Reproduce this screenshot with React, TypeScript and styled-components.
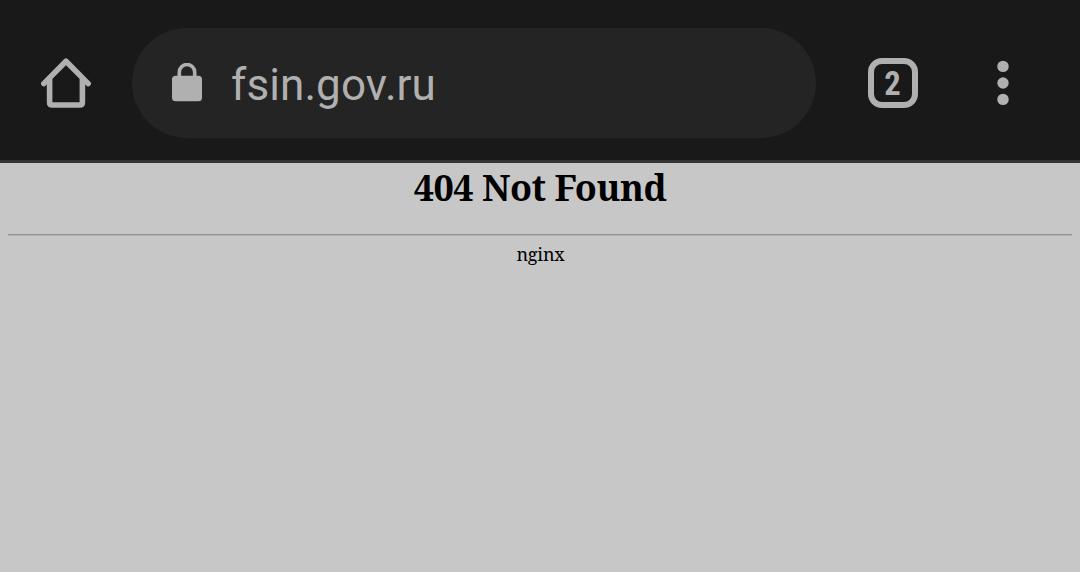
import { FC } from "react";
import styled, { createGlobalStyle } from "styled-components";


const HomeIcon: FC = () => {
    return (
        <svg width="52" height="52" viewBox="0 0 52 52" fill="none" stroke="#b0b0b0" strokeWidth="5.6">
            <path d="M3.8 26.6L26 4.2L48.2 26.6" strokeLinecap="round" strokeLinejoin="round" />
            <path d="M9.6 22V45.4Q9.6 48 12.2 48H39.8Q42.4 48 42.4 45.4V22" />
        </svg>
    )
}

const LockIcon: FC = () => {
    return (
        <svg width="30" height="40" viewBox="0 0 30 40">
            <path d="M7.3 14V9.2A7.7 7.7 0 0 1 22.7 9.2V14" fill="none" stroke="#b0b0b0" strokeWidth="3.6" />
            <rect x="0" y="12.7" width="30" height="25.6" rx="3.6" fill="#b0b0b0" />
        </svg>
    )
}

const MenuIcon: FC = () => {
    return (
        <svg width="12" height="46" viewBox="0 0 12 46" fill="#b0b0b0">
            <circle cx="6" cy="6.4" r="5.7" />
            <circle cx="6" cy="23" r="5.7" />
            <circle cx="6" cy="39.4" r="5.7" />
        </svg>
    )
}

const App: FC = () => {
    return (
        <Browser>
            <GlobalStyle />
            <Toolbar>
                <HomeButton aria-label="Home"><HomeIcon /></HomeButton>
                <AddressBar>
                    <LockIcon />
                    <Address>fsin.gov.ru</Address>
                </AddressBar>
                <TabsButton><TabCount>2</TabCount></TabsButton>
                <MenuButton aria-label="Menu"><MenuIcon /></MenuButton>
            </Toolbar>
            <Page>
                <Title>404 Not Found</Title>
                <Divider />
                <Server>nginx</Server>
            </Page>
        </Browser>
    )
}

export default App


const GlobalStyle = createGlobalStyle`
    body {
        margin: 0;
        background-color: #c7c7c7;
    }
`

const Browser = styled('div')`
    display: flex;
    flex-direction: column;
    height: 100vh;
    overflow: hidden;
`

const Toolbar = styled('header')`
    display: flex;
    align-items: center;
    box-sizing: border-box;
    flex: none;
    height: 163px;
    padding: 6px 71px 0 40px;
    border-bottom: 3px solid #353535;
    background-color: #191919;
`

const IconButton = styled('button')`
    display: flex;
    align-items: center;
    justify-content: center;
    flex: none;
    padding: 0;
    border: none;
    background: none;
`

const HomeButton = styled(IconButton)`
    width: 52px;
    height: 52px;
    margin-right: 40px;
`

const AddressBar = styled('div')`
    display: flex;
    align-items: center;
    box-sizing: border-box;
    width: 684px;
    height: 110px;
    padding-left: 40px;
    border-radius: 55px;
    background-color: #242424;
`

const Address = styled('span')`
    margin-left: 29px;
    padding-top: 4px;
    font-family: Roboto, sans-serif;
    font-size: 44px;
    line-height: 52px;
    letter-spacing: 0.1px;
    color: #b0b0b0;
`

const TabsButton = styled(IconButton)`
    box-sizing: border-box;
    width: 50px;
    height: 50px;
    margin-left: 52px;
    border: 6px solid #b0b0b0;
    border-radius: 14px;
`

const TabCount = styled('span')`
    font-family: "Roboto Condensed", Roboto, sans-serif;
    font-size: 34px;
    font-weight: 700;
    line-height: 38px;
    color: #b0b0b0;
    transform: scaleX(0.96);
`

const MenuButton = styled(IconButton)`
    width: 12px;
    margin-left: auto;
`

const Page = styled('main')`
    padding: 0 8px;
    font-family: "Noto Serif", "DejaVu Serif Condensed", "DejaVu Serif", serif;
    text-align: center;
    color: #000;
`

const Title = styled('h1')`
    margin: 0;
    font-size: 36px;
    font-weight: 700;
    line-height: 50px;
    letter-spacing: -0.5px;
`

const Divider = styled('hr')`
    margin: 21px 0 6px;
    border: none;
    border-top: 1px solid #929292;
    border-bottom: 1px solid #b4b4b4;
`

const Server = styled('div')`
    padding-left: 1px;
    font-size: 18px;
    line-height: 25px;
    letter-spacing: -0.2px;
`
